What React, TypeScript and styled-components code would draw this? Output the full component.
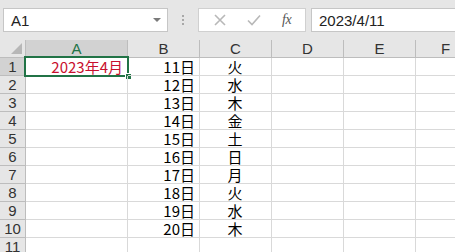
import React from 'react'
import styled, { createGlobalStyle, css } from 'styled-components'

const GlobalStyle = createGlobalStyle`
  html, body {
    margin: 0;
    padding: 0;
    background: #ffffff;
  }
  body {
    width: 455px;
    height: 252px;
    overflow: hidden;
    font-family: "Noto Sans CJK JP", "DejaVu Sans", sans-serif;
  }
`

const green = '#217346'
const gridLine = '#d9d9d9'
const headLine = '#bdbdbd'

const Sheet = styled.div`
  width: 455px;
  height: 252px;
  overflow: hidden;
`

const FormulaBar = styled.div`
  height: 40px;
  background: #e6e6e6;
  display: flex;
  align-items: flex-start;
  padding-top: 8px;
  box-sizing: border-box;
  white-space: nowrap;
`

const NameBox = styled.div`
  margin-left: 3px;
  width: 165px;
  height: 24px;
  box-sizing: border-box;
  background: #fff;
  border: 1px solid #c6c6c6;
  display: flex;
  align-items: center;
  justify-content: space-between;
  padding: 0 6px 0 7px;
  font-family: "Liberation Sans", Arial, sans-serif;
  font-size: 15px;
  color: #222;
`

const Arrow = styled.span`
  width: 0;
  height: 0;
  border-left: 4px solid transparent;
  border-right: 4px solid transparent;
  border-top: 4px solid #7a7a7a;
`

const Grip = styled.div`
  width: 30px;
  height: 24px;
  display: flex;
  flex-direction: column;
  align-items: center;
  justify-content: center;
  gap: 2px;
  span {
    width: 2px;
    height: 2px;
    background: #a8a8a8;
  }
`

const ButtonBox = styled.div`
  width: 108px;
  height: 24px;
  box-sizing: border-box;
  background: #fff;
  border: 1px solid #d0d0d0;
  display: flex;
  align-items: center;
  justify-content: space-around;
  padding: 0 4px;
`

const Fx = styled.span`
  font-family: "Liberation Serif", serif;
  font-style: italic;
  font-size: 14px;
  color: #555;
  letter-spacing: -0.5px;
`

const Input = styled.div`
  margin-left: 5px;
  flex: 1;
  height: 24px;
  box-sizing: border-box;
  background: #fff;
  border: 1px solid #c6c6c6;
  border-right: none;
  display: flex;
  align-items: center;
  padding-left: 7px;
  font-family: "Liberation Sans", Arial, sans-serif;
  font-size: 15px;
  color: #222;
`

const Grid = styled.div`
  display: grid;
  grid-template-columns: 26px 102px 72px 72px 72px 72px 60px;
  grid-auto-rows: 18px;
`

const HeadCell = styled.div<{ $selected?: boolean; $row?: boolean }>`
  box-sizing: border-box;
  background: ${p => (p.$selected ? '#d2d2d2' : '#e6e6e6')};
  border-right: 1px solid ${headLine};
  border-bottom: 1px solid ${headLine};
  display: flex;
  align-items: center;
  justify-content: center;
  font-family: "Liberation Sans", Arial, sans-serif;
  font-size: 15px;
  color: #333;
  ${p =>
    p.$selected &&
    !p.$row &&
    css`
      border-bottom: 2px solid ${green};
      color: ${green};
    `}
`

const Corner = styled(HeadCell)`
  position: relative;
  &::after {
    content: '';
    position: absolute;
    right: 3px;
    bottom: 3px;
    width: 0;
    height: 0;
    border-left: 11px solid transparent;
    border-bottom: 11px solid #b7b7b7;
  }
`

const Cell = styled.div<{ $align?: 'left' | 'right' | 'center'; $color?: string }>`
  position: relative;
  box-sizing: border-box;
  border-right: 1px solid ${gridLine};
  border-bottom: 1px solid ${gridLine};
  display: flex;
  align-items: center;
  justify-content: ${p =>
    p.$align === 'right' ? 'flex-end' : p.$align === 'center' ? 'center' : 'flex-start'};
  padding: 0 4px 0 3px;
  font-size: 15px;
  color: ${p => p.$color || '#000'};
  white-space: nowrap;
`

const Selection = styled.div`
  position: absolute;
  left: -2px;
  top: -2px;
  right: -2px;
  bottom: -2px;
  border: 2px solid ${green};
  pointer-events: none;
  &::after {
    content: '';
    position: absolute;
    right: -5px;
    bottom: -5px;
    width: 5px;
    height: 5px;
    background: ${green};
    border: 1px solid #fff;
  }
`

const Label = styled.span`
  position: relative;
`

const columns = ['A', 'B', 'C', 'D', 'E', 'F']
const weekdays = ['火', '水', '木', '金', '土', '日', '月', '火', '水', '木']

const CloseIcon = () => (
  <svg width="14" height="14" viewBox="0 0 14 14">
    <path d="M2 2 L12 12 M12 2 L2 12" stroke="#b8b8b8" strokeWidth="1.6" fill="none" />
  </svg>
)

const CheckIcon = () => (
  <svg width="16" height="14" viewBox="0 0 16 14">
    <path d="M2 7.5 L6 11.5 L14 2.5" stroke="#b8b8b8" strokeWidth="1.6" fill="none" />
  </svg>
)

const App = () => {
  const rows = Array.from({ length: 11 }, (_, i) => i + 1)

  return (
    <Sheet>
      <GlobalStyle />
      <FormulaBar>
        <NameBox>
          A1
          <Arrow />
        </NameBox>
        <Grip>
          <span />
          <span />
          <span />
        </Grip>
        <ButtonBox>
          <CloseIcon />
          <CheckIcon />
          <Fx>fx</Fx>
        </ButtonBox>
        <Input>2023/4/11</Input>
      </FormulaBar>
      <Grid>
        <Corner />
        {columns.map(col => (
          <HeadCell key={col} $selected={col === 'A'}>
            {col}
          </HeadCell>
        ))}
        {rows.map(row => (
          <React.Fragment key={row}>
            <HeadCell $row $selected={row === 1}>
              {row}
            </HeadCell>
            <Cell $align="right" $color="#c8102e">
              {row === 1 && (
                <>
                  <Label>2023年4月</Label>
                  <Selection />
                </>
              )}
            </Cell>
            <Cell $align="right">{row <= 10 ? `${row + 10}日` : ''}</Cell>
            <Cell $align="center">{row <= 10 ? weekdays[row - 1] : ''}</Cell>
            <Cell />
            <Cell />
            <Cell />
          </React.Fragment>
        ))}
      </Grid>
    </Sheet>
  )
}

export default App
